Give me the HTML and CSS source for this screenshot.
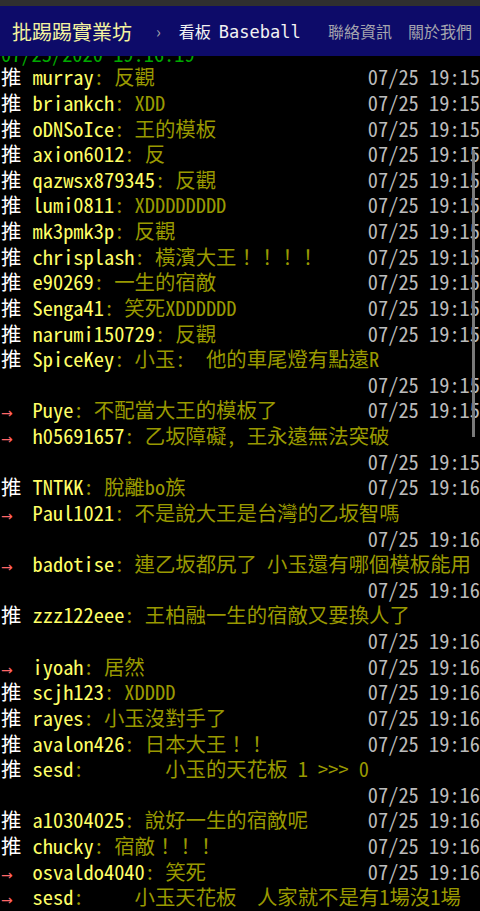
FILE: index.html
```html
<!DOCTYPE html>
<html lang="zh-Hant">
<head>
<meta charset="utf-8">
<title>看板 Baseball - 批踢踢實業坊</title>
<link rel="stylesheet" href="styles.css">
</head>
<body>
<header class="topbar">
  <a class="logo">批踢踢實業坊</a>
  <span class="sep">›</span>
  <a class="board"><span class="board-label">看板</span><span class="board-name">Baseball</span></a>
  <nav class="links"><a>聯絡資訊</a><a>關於我們</a></nav>
</header>
<main class="screen">
  <div class="edited">07/25/2020 19:16:19</div>
  <div class="push"><span class="main"><span class="tag">推 </span><span class="uid">murray</span><span class="txt">: 反觀</span></span><span class="time">07/25 19:15</span></div>
  <div class="push"><span class="main"><span class="tag">推 </span><span class="uid">briankch</span><span class="txt">: XDD</span></span><span class="time">07/25 19:15</span></div>
  <div class="push"><span class="main"><span class="tag">推 </span><span class="uid">oDNSoIce</span><span class="txt">: 王的模板</span></span><span class="time">07/25 19:15</span></div>
  <div class="push"><span class="main"><span class="tag">推 </span><span class="uid">axion6012</span><span class="txt">: 反</span></span><span class="time">07/25 19:15</span></div>
  <div class="push"><span class="main"><span class="tag">推 </span><span class="uid">qazwsx879345</span><span class="txt">: 反觀</span></span><span class="time">07/25 19:15</span></div>
  <div class="push"><span class="main"><span class="tag">推 </span><span class="uid">lumi0811</span><span class="txt">: XDDDDDDDD</span></span><span class="time">07/25 19:15</span></div>
  <div class="push"><span class="main"><span class="tag">推 </span><span class="uid">mk3pmk3p</span><span class="txt">: 反觀</span></span><span class="time">07/25 19:15</span></div>
  <div class="push"><span class="main"><span class="tag">推 </span><span class="uid">chrisplash</span><span class="txt">: 橫濱大王！！！！</span></span><span class="time">07/25 19:15</span></div>
  <div class="push"><span class="main"><span class="tag">推 </span><span class="uid">e90269</span><span class="txt">: 一生的宿敵</span></span><span class="time">07/25 19:15</span></div>
  <div class="push"><span class="main"><span class="tag">推 </span><span class="uid">Senga41</span><span class="txt">: 笑死XDDDDDD</span></span><span class="time">07/25 19:15</span></div>
  <div class="push"><span class="main"><span class="tag">推 </span><span class="uid">narumi150729</span><span class="txt">: 反觀</span></span><span class="time">07/25 19:15</span></div>
  <div class="push wrap"><span class="main"><span class="tag">推 </span><span class="uid">SpiceKey</span><span class="txt">: 小玉:  他的車尾燈有點遠R</span></span><span class="time">07/25 19:15</span></div>
  <div class="push"><span class="main"><span class="tag arrow">→</span><span class="uid">Puye</span><span class="txt">: 不配當大王的模板了</span></span><span class="time">07/25 19:15</span></div>
  <div class="push wrap"><span class="main"><span class="tag arrow">→</span><span class="uid">h05691657</span><span class="txt">: 乙坂障礙, 王永遠無法突破</span></span><span class="time">07/25 19:15</span></div>
  <div class="push"><span class="main"><span class="tag">推 </span><span class="uid">TNTKK</span><span class="txt">: 脫離bo族</span></span><span class="time">07/25 19:16</span></div>
  <div class="push wrap"><span class="main"><span class="tag arrow">→</span><span class="uid">Paul1021</span><span class="txt">: 不是說大王是台灣的乙坂智嗎</span></span><span class="time">07/25 19:16</span></div>
  <div class="push wrap"><span class="main"><span class="tag arrow">→</span><span class="uid">badotise</span><span class="txt">: 連乙坂都尻了 小玉還有哪個模板能用</span></span><span class="time">07/25 19:16</span></div>
  <div class="push wrap"><span class="main"><span class="tag">推 </span><span class="uid">zzz122eee</span><span class="txt">: 王柏融一生的宿敵又要換人了</span></span><span class="time">07/25 19:16</span></div>
  <div class="push"><span class="main"><span class="tag arrow">→</span><span class="uid">iyoah</span><span class="txt">: 居然</span></span><span class="time">07/25 19:16</span></div>
  <div class="push"><span class="main"><span class="tag">推 </span><span class="uid">scjh123</span><span class="txt">: XDDDD</span></span><span class="time">07/25 19:16</span></div>
  <div class="push"><span class="main"><span class="tag">推 </span><span class="uid">rayes</span><span class="txt">: 小玉沒對手了</span></span><span class="time">07/25 19:16</span></div>
  <div class="push"><span class="main"><span class="tag">推 </span><span class="uid">avalon426</span><span class="txt">: 日本大王！！</span></span><span class="time">07/25 19:16</span></div>
  <div class="push wrap"><span class="main"><span class="tag">推 </span><span class="uid">sesd</span><span class="txt">:        小玉的天花板 1 &gt;&gt;&gt; 0</span></span><span class="time">07/25 19:16</span></div>
  <div class="push"><span class="main"><span class="tag">推 </span><span class="uid">a10304025</span><span class="txt">: 說好一生的宿敵呢</span></span><span class="time">07/25 19:16</span></div>
  <div class="push"><span class="main"><span class="tag">推 </span><span class="uid">chucky</span><span class="txt">: 宿敵！！！</span></span><span class="time">07/25 19:16</span></div>
  <div class="push"><span class="main"><span class="tag arrow">→</span><span class="uid">osvaldo4040</span><span class="txt">: 笑死</span></span><span class="time">07/25 19:16</span></div>
  <div class="push wrap"><span class="main"><span class="tag arrow">→</span><span class="uid">sesd</span><span class="txt">:     小玉天花板  人家就不是有1場沒1場</span></span><span class="time">07/25 19:16</span></div>
</main>
<div class="scroll-thumb"></div>
</body>
</html>
```

FILE: styles.css
```css
html, body {
  margin: 0;
  padding: 0;
  background: #000;
}

body {
  width: 480px;
  height: 911px;
  overflow: hidden;
  position: relative;
}

.topbar {
  position: fixed;
  top: 0;
  left: 0;
  right: 0;
  z-index: 2;
  height: 50px;
  border-top: 6px solid #2f2f2f;
  background: #0d0b69;
  display: flex;
  align-items: center;
  padding: 0 8px 0 12px;
  font-family: "Noto Sans CJK TC", "Noto Sans", sans-serif;
}

.logo {
  color: #f4f4a0;
  font-size: 20px;
}

.sep {
  color: #a0a0a8;
  font-size: 16px;
  margin: 0 18px 0 24px;
}

.board {
  color: #f2f2f2;
  display: flex;
  align-items: baseline;
}

.board-label {
  font-size: 16px;
  margin-right: 8px;
}

.board-name {
  font-family: "DejaVu Sans Mono", monospace;
  font-size: 17px;
}

.links {
  margin-left: auto;
  display: flex;
  gap: 16px;
}

.links a {
  color: #a4a4ae;
  font-size: 16px;
}

.screen {
  font-family: "Noto Sans Mono CJK TC", "DejaVu Sans Mono", monospace;
  font-size: 20.4px;
  line-height: 25.625px;
  padding: 40.8px 0 0 1px;
  color: #bbb;
}

.edited {
  color: #00a800;
  height: 23.5px;
  white-space: pre;
}

.push {
  display: flex;
  flex-wrap: wrap;
  white-space: pre;
}

.push.wrap .main {
  flex-basis: 100%;
}

.tag {
  display: inline-block;
  width: 31.6px;
  color: #fff;
}

.tag.arrow {
  color: #ff6666;
  font-family: "DejaVu Sans", sans-serif;
  font-size: 14px;
  line-height: 1;
}

.uid {
  color: #ffff66;
}

.txt {
  color: #999900;
}

.time {
  margin-left: auto;
  color: #bbb;
}

.scroll-thumb {
  position: absolute;
  top: 150px;
  right: 5px;
  width: 3px;
  height: 287px;
  background: #7a7a7a;
  z-index: 3;
}
```
